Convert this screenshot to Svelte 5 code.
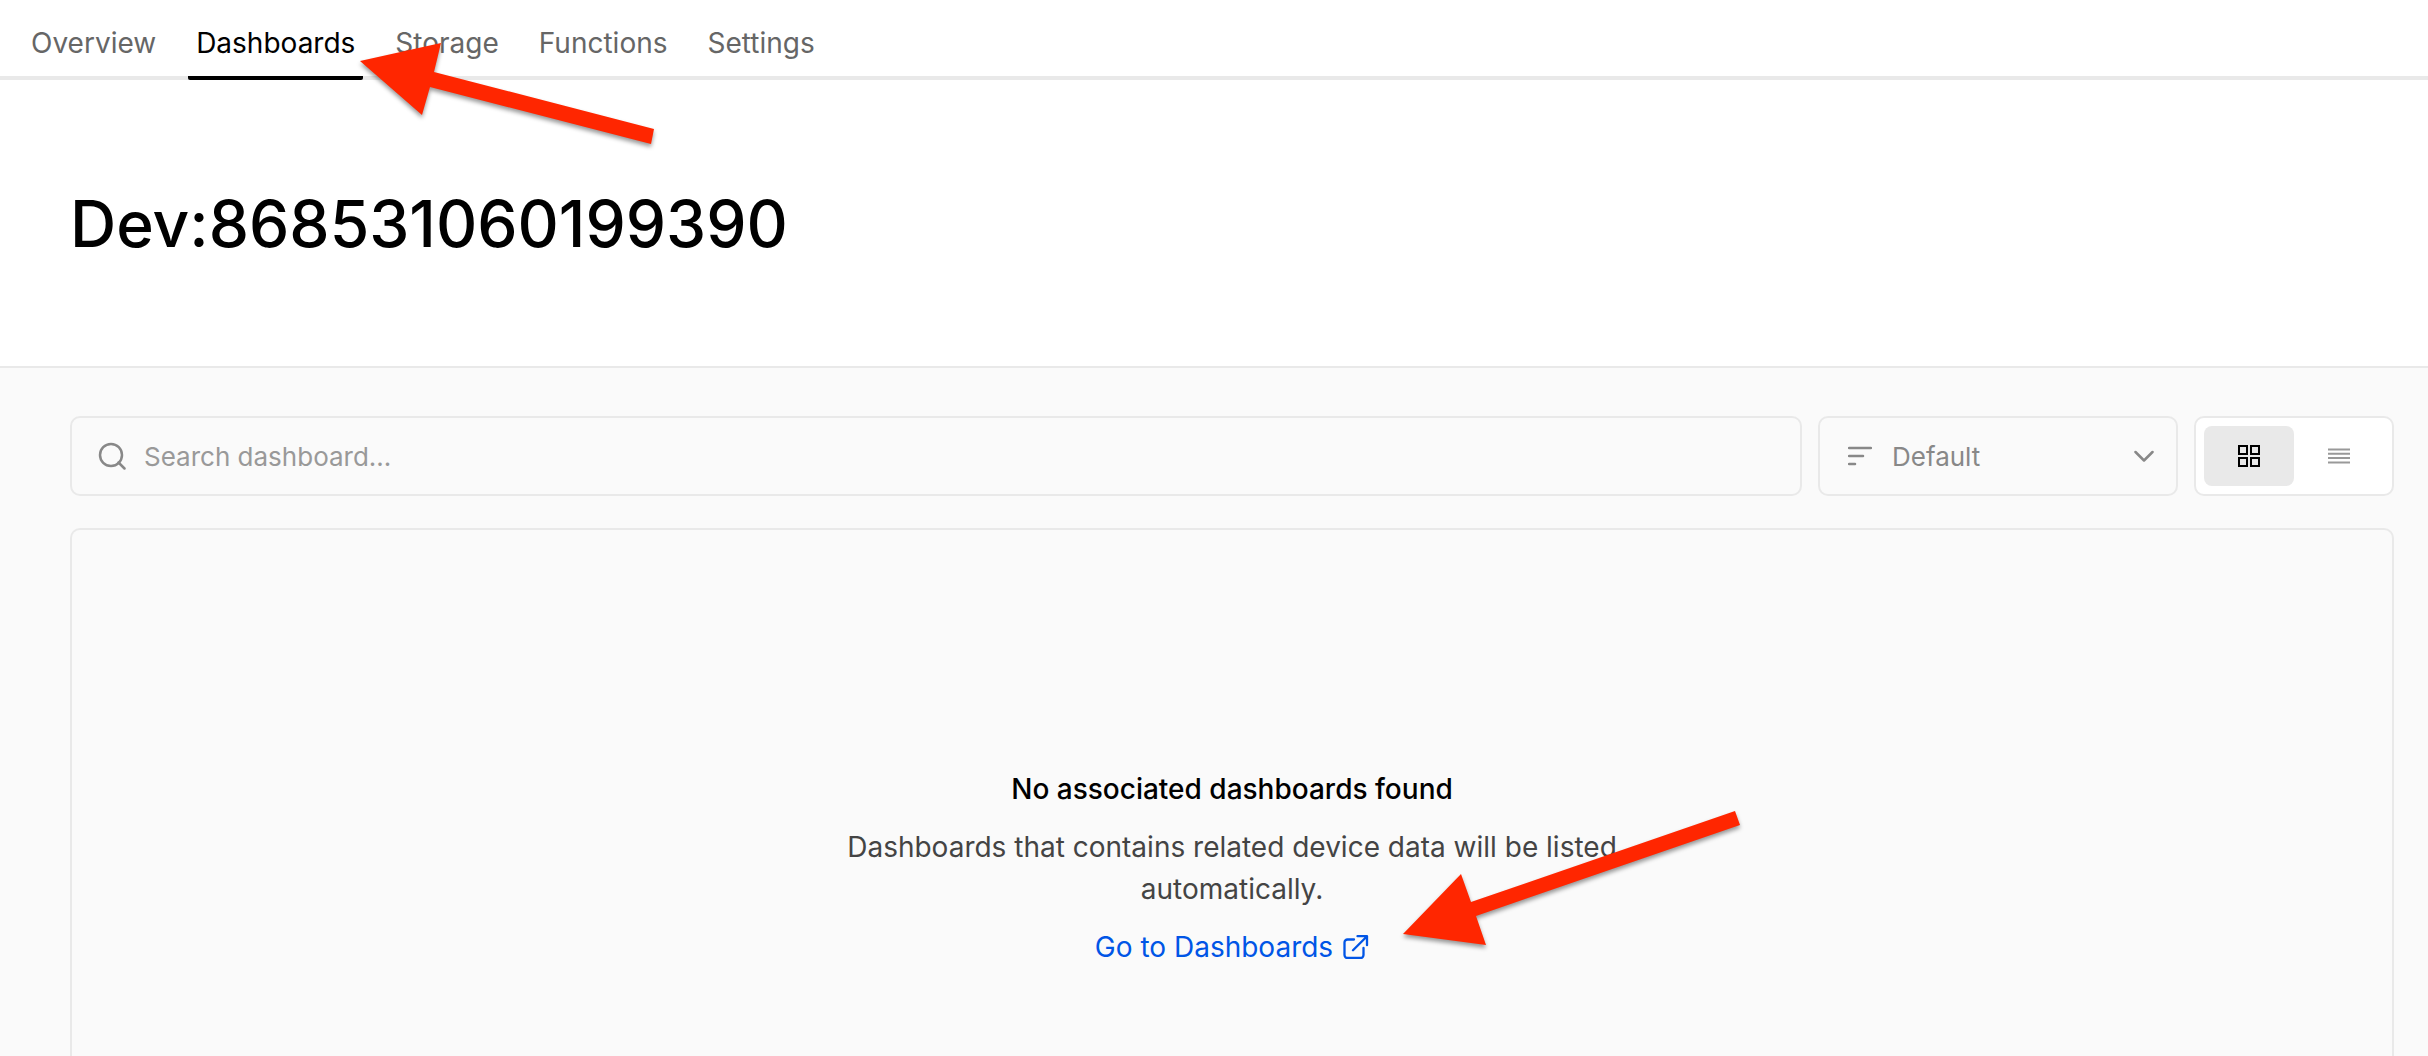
<script>
  const tabs = ['Overview', 'Dashboards', 'Storage', 'Functions', 'Settings'];
  let active = $state('Dashboards');
  let view = $state('grid');
</script>

<div class="page">
  <nav class="tabs" aria-label="Device sections">
    {#each tabs as tab}
      <a
        href="#{tab.toLowerCase()}"
        class="tab"
        class:active={active === tab}
        aria-current={active === tab ? 'page' : undefined}
        onclick={() => (active = tab)}>{tab}</a>
    {/each}
  </nav>

  <header class="title">
    <h1>Dev:868531060199390</h1>
  </header>

  <main class="content">
    <div class="toolbar">
      <label class="field search">
        <svg class="icon" width="28" height="28" viewBox="0 0 28 28" aria-hidden="true">
          <circle cx="13" cy="13" r="11" />
          <path d="M20.5 20.5l6 6" />
        </svg>
        <input type="text" placeholder="Search dashboard..." aria-label="Search dashboard" />
      </label>

      <div class="field sort">
        <svg class="icon" width="24" height="20" viewBox="0 0 24 20" aria-hidden="true">
          <path d="M1 2h22M1 10h14M1 18h6" />
        </svg>
        <select aria-label="Sort order">
          <option>Default</option>
        </select>
        <svg class="icon chevron" width="20" height="12" viewBox="0 0 20 12" aria-hidden="true">
          <path d="M1.5 2l8.5 8.5L18.5 2" />
        </svg>
      </div>

      <div class="views" role="group" aria-label="View mode">
        <button type="button" aria-label="Grid view" aria-pressed={view === 'grid'} onclick={() => (view = 'grid')}>
          <svg width="22" height="22" viewBox="0 0 22 22" aria-hidden="true">
            <path d="M1 1h8v8H1zM13 1h8v8h-8zM1 13h8v8H1zM13 13h8v8h-8z" />
          </svg>
        </button>
        <button type="button" aria-label="List view" aria-pressed={view === 'list'} onclick={() => (view = 'list')}>
          <svg width="22" height="16" viewBox="0 0 22 16" aria-hidden="true">
            <path d="M0 1.4h22M0 5.8h22M0 10.1h22M0 14.4h22" />
          </svg>
        </button>
      </div>
    </div>

    <section class="empty">
      <h2>No associated dashboards found</h2>
      <p>Dashboards that contains related device data will be listed automatically.</p>
      <a href="#dashboards">
        Go to Dashboards
        <svg width="26" height="24" viewBox="0 0 26 24" aria-hidden="true">
          <path d="M11 4.5H4.5a3 3 0 0 0-3 3V20a3 3 0 0 0 3 3h13a3 3 0 0 0 3-3v-7M14.5 1.2H24v9M24 1.2L10 15.2" />
        </svg>
      </a>
    </section>
  </main>

  <svg class="pointer to-tab" width="296" height="102" viewBox="0 0 296 102" aria-hidden="true">
    <path d="M0 18L81 0L74 29L294 86L291 101L70 44L62 72Z" />
  </svg>
  <svg class="pointer to-link" width="338" height="136" viewBox="0 0 338 136" aria-hidden="true">
    <path d="M0 124L58 64L68 92L332 1L337 15L73 106L83 135Z" />
  </svg>
</div>

<style>
  :global(body) {
    background: #fafafa;
    font-family: Inter, "Liberation Sans", sans-serif;
  }

  :global(*) {
    box-sizing: border-box;
  }

  .page {
    position: relative;
    min-height: 100vh;
    display: flex;
    flex-direction: column;
    overflow: hidden;
    font-size: 28px;
    line-height: 42px;
  }

  .tabs {
    display: flex;
    gap: 24px;
    height: 80px;
    padding: 0 23px;
    background: #fff;
    box-shadow: inset 0 -4px #e9e9e9;
  }

  .tab {
    display: flex;
    align-items: center;
    padding: 10px 8px 0;
    color: #666;
    text-decoration: none;
    border-bottom: 4px solid transparent;
    border-radius: 2px;
  }

  .tab.active {
    color: #000;
    border-color: #000;
  }

  .title {
    display: flex;
    align-items: center;
    height: 288px;
    padding: 2px 70px 0;
    background: #fff;
    border-bottom: 2px solid #e9e9e9;
  }

  h1 {
    margin: 0;
    font-size: 64px;
    line-height: 80px;
    font-weight: 500;
  }

  .content {
    flex: 1;
    display: flex;
    flex-direction: column;
    gap: 32px;
    padding: 48px 34px 0 70px;
  }

  .toolbar {
    display: flex;
    gap: 16px;
    height: 80px;
  }

  .field,
  .views {
    display: flex;
    align-items: center;
    border: 2px solid #e9e9e9;
    border-radius: 10px;
  }

  .icon {
    flex: none;
    fill: none;
    stroke: #888;
    stroke-width: 2.5;
    stroke-linecap: round;
    stroke-linejoin: round;
  }

  .search {
    flex: 1;
    gap: 18px;
    padding: 0 26px;
  }

  input,
  select {
    flex: 1;
    min-width: 0;
    padding: 2px 0 0;
    border: 0;
    outline: 0;
    background: transparent;
    color: #888;
    font: inherit;
    font-size: 26px;
    appearance: none;
  }

  input::placeholder {
    color: #999;
    opacity: 1;
  }

  .sort {
    width: 360px;
    gap: 20px;
    padding: 0 22px 0 28px;
  }

  .views {
    width: 200px;
    padding: 8px;
    background: #fff;
  }

  button {
    flex: 1;
    height: 60px;
    display: flex;
    align-items: center;
    justify-content: center;
    padding: 0;
    border: 0;
    border-radius: 8px;
    background: transparent;
    color: #999;
  }

  button[aria-pressed='true'] {
    background: #e9e9e9;
    color: #000;
  }

  button svg {
    fill: none;
    stroke: currentColor;
    stroke-width: 2;
  }

  .empty {
    flex: 1;
    display: flex;
    flex-direction: column;
    align-items: center;
    gap: 16px;
    padding-top: 238px;
    border: 2px solid #e9e9e9;
    border-bottom: 0;
    border-radius: 10px 10px 0 0;
    text-align: center;
  }

  h2,
  p {
    margin: 0;
    font-size: 28px;
    line-height: 42px;
  }

  h2 {
    font-weight: 500;
  }

  p {
    max-width: 800px;
    color: #444;
  }

  .empty a {
    display: flex;
    align-items: center;
    gap: 10px;
    color: #0055e6;
    text-decoration: none;
  }

  .empty a svg {
    fill: none;
    stroke: currentColor;
    stroke-width: 2.3;
    stroke-linecap: round;
    stroke-linejoin: round;
  }

  .pointer {
    position: absolute;
    overflow: visible;
    pointer-events: none;
    fill: #ff2600;
    filter: drop-shadow(0 3px 2px rgb(0 0 0 / 40%));
  }

  .to-tab {
    left: 360px;
    top: 43px;
  }

  .to-link {
    left: 1403px;
    top: 810px;
  }
</style>
